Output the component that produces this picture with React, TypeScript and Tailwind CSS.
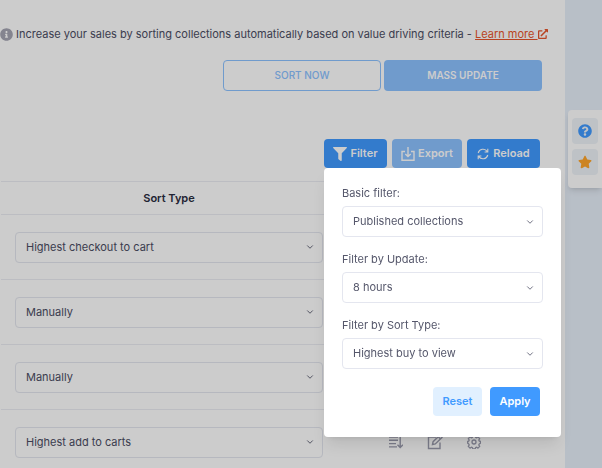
import { useState } from "react";
import { FaExternalLinkAlt, FaFilter, FaInfoCircle, FaQuestionCircle, FaStar } from "react-icons/fa";
import { FiChevronDown } from "react-icons/fi";

const SORT_TYPES = ["Highest checkout to cart", "Manually", "Highest add to carts", "Highest buy to view"];
const STATUSES = ["Published collections", "All collections"];
const UPDATES = ["8 hours", "24 hours"];

const initialRows = [
  { id: 1, sort: "Highest checkout to cart" },
  { id: 2, sort: "Manually" },
  { id: 3, sort: "Manually" },
  { id: 4, sort: "Highest add to carts" },
];

export default function App() {
  const [rows, setRows] = useState(initialRows);
  const [open, setOpen] = useState(true);

  function changeSort(id: number, sort: string) {
    setRows((prev) => prev.map((r) => (r.id === id ? { ...r, sort } : r)));
  }

  return (
    <div className="flex h-screen overflow-hidden bg-[#e7eff9] font-['Inter',sans-serif] text-[11px] text-[#4b4d63]">
      <main className="min-w-0 flex-1 bg-white pt-[26px]">
        <p className="flex h-4 items-center gap-[3px] pr-6 whitespace-nowrap">
          <FaInfoCircle className="size-[13px] shrink-0 text-[#a5a5b3]" />
          <span>
            Increase your sales by sorting collections automatically based on value driving criteria -{" "}
            <a href="#learn" className="text-[#e8552b] underline">
              Learn more <FaExternalLinkAlt className="inline size-[10px] align-[-1px]" />
            </a>
          </span>
        </p>

        <div className="mt-[18px] flex justify-end gap-[3px] pr-[23px] text-[10px]">
          <button className="h-[31px] w-[158px] rounded border border-[#8cc2ff] font-medium text-[#8cc2ff]">
            SORT NOW
          </button>
          <button className="h-[31px] w-[158px] rounded bg-[#8cc2ff] font-semibold text-white">MASS UPDATE</button>
        </div>

        <div className="mt-12 flex justify-end gap-[5px] pr-[25px] font-semibold text-white">
          <div className="relative">
            <button
              className="flex h-[29px] w-[63px] items-center justify-center gap-[3px] rounded bg-[#409aff]"
              onClick={() => setOpen(!open)}
            >
              <FaFilter className="size-[14px]" />
              Filter
            </button>
            {open && <FilterPanel onClose={() => setOpen(false)} />}
          </div>
          <button className="flex h-[29px] w-[70px] items-center justify-center gap-[3px] rounded bg-[#8cc2ff]">
            <ExportIcon />
            Export
          </button>
          <button className="flex h-[29px] w-[73px] items-center justify-center gap-1 rounded bg-[#409aff]">
            <ReloadIcon />
            Reload
          </button>
        </div>

        <div className="mt-[13px] pr-6 pl-px">
          <table className="w-full border-t border-[#ebedf3]">
            <thead>
              <tr className="h-[33px] border-b border-[#ebedf3]">
                <th className="w-[336px] font-semibold text-[#2a2c40]">Sort Type</th>
                <th aria-label="Actions" />
              </tr>
            </thead>
            <tbody>
              {rows.map((row) => (
                <tr key={row.id} className="h-[65px] border-b border-[#ebedf3]">
                  <td className="px-[14px]">
                    <Select
                      label={`Sort type of collection ${row.id}`}
                      value={row.sort}
                      options={SORT_TYPES}
                      onChange={(v) => changeSort(row.id, v)}
                    />
                  </td>
                  <td>
                    <div className="flex items-center justify-center gap-6 pr-2 text-[#9a9bad]">
                      <button aria-label="Sort">
                        <SortIcon />
                      </button>
                      <button aria-label="Edit">
                        <EditIcon />
                      </button>
                      <button aria-label="Settings">
                        <GearIcon />
                      </button>
                    </div>
                  </td>
                </tr>
              ))}
            </tbody>
          </table>
        </div>
      </main>

      <div className="w-[37px] shrink-0" />

      <aside className="absolute top-[110px] right-0 flex w-[34px] flex-col items-center gap-[5px] rounded-l bg-white pt-2 pb-[13px] shadow-md">
        <button aria-label="Help" className="flex size-[26px] items-center justify-center rounded bg-[#eef3f8]">
          <FaQuestionCircle className="size-[14px] text-[#409aff]" />
        </button>
        <button aria-label="Favourites" className="flex size-[26px] items-center justify-center rounded bg-[#eef3f8]">
          <FaStar className="size-[14px] text-[#ffa52b]" />
        </button>
      </aside>

      {open && <div className="fixed inset-0 z-10 bg-black/20" onClick={() => setOpen(false)} />}
    </div>
  );
}

function FilterPanel({ onClose }: { onClose(): void }) {
  const [status, setStatus] = useState("Published collections");
  const [update, setUpdate] = useState("8 hours");
  const [sort, setSort] = useState("Highest buy to view");

  return (
    <div className="absolute top-full left-0 z-20 w-[237px] rounded bg-white px-[18px] pt-[17px] pb-[21px] font-normal text-[#55576b] shadow-lg">
      <div className="space-y-[14px]">
        <Field label="Basic filter:" value={status} options={STATUSES} onChange={setStatus} />
        <Field label="Filter by Update:" value={update} options={UPDATES} onChange={setUpdate} />
        <Field label="Filter by Sort Type:" value={sort} options={SORT_TYPES} onChange={setSort} />
      </div>
      <div className="mt-[18px] flex justify-end gap-2 pr-[3px] font-semibold">
        <button className="h-[29px] w-[49px] rounded bg-[#e1f0ff] text-[#409aff]" onClick={onClose}>
          Reset
        </button>
        <button className="h-[29px] w-[50px] rounded bg-[#409aff] text-white" onClick={onClose}>
          Apply
        </button>
      </div>
    </div>
  );
}

type SelectProps = {
  label: string;
  value: string;
  options: string[];
  onChange(value: string): void;
};

function Field(props: SelectProps) {
  return (
    <label className="block">
      <span className="mb-[5px] block leading-4">{props.label}</span>
      <Select {...props} />
    </label>
  );
}

function Select({ label, value, options, onChange }: SelectProps) {
  return (
    <span className="grid items-center">
      <select
        aria-label={label}
        className="col-start-1 row-start-1 h-[31px] w-full appearance-none rounded border border-[#e4e6ef] bg-transparent pr-8 pl-[10px]"
        value={value}
        onChange={(e) => onChange(e.target.value)}
      >
        {options.map((o) => (
          <option key={o}>{o}</option>
        ))}
      </select>
      <FiChevronDown className="pointer-events-none col-start-1 row-start-1 mr-2 size-[10px] justify-self-end" />
    </span>
  );
}

function ExportIcon() {
  return (
    <svg className="size-[14px]" viewBox="0 0 14 14" fill="none" stroke="currentColor" strokeWidth="1.4">
      <path d="M4 4.500H1v8.700h12V4.500h-3M7 0v9.500M4.300 6.900L7 9.600l2.700-2.700" />
    </svg>
  );
}

function ReloadIcon() {
  return (
    <svg className="size-3" viewBox="0 0 12 12" fill="none" stroke="currentColor" strokeWidth="1.1">
      <path d="M1.200 5A5 5 0 0 1 10.300 3.600M10.800 .8v3.200H7.600M10.800 7A5 5 0 0 1 1.700 8.400M1.200 11.200V8h3.200" />
    </svg>
  );
}

function SortIcon() {
  return (
    <svg className="size-[14px]" viewBox="0 0 14 14" fill="none" stroke="currentColor" strokeWidth="1.4">
      <path d="M0 2h9M0 5.300h9M0 8.600h7M0 11.900h8M11.200 1.500v11M8.500 9.800l2.700 2.700L14 9.800" />
    </svg>
  );
}

function EditIcon() {
  return (
    <svg className="size-4" viewBox="0 0 16 16" fill="none" stroke="currentColor" strokeWidth="1.4">
      <path d="M9 3H1.500v11.500H13V8.500" />
      <path d="M5.500 10.500l.6-2.800 6.700-6.500 2.200 2.200-6.700 6.500zM11.300 2.700l2.200 2.200" />
    </svg>
  );
}

function GearIcon() {
  return (
    <svg
      className="size-[14px]"
      viewBox="0 0 14 14"
      fill="none"
      stroke="currentColor"
      strokeWidth="1.3"
      strokeLinejoin="round"
    >
      <path d="M5.800 .8h2.400l.4 1.600 1 .4 1.400-.9 1.700 1.700-.9 1.400.4 1 1.300.3v1.900l-1.300.8-.4 1 .9 1.400-1.700 1.700-1.400-.9-1 .4-.4 1.300H5.800l-.4-1.300-1-.4-1.400.9-1.700-1.700.9-1.400-.4-1L.7 8.200V6.300L1.800 6l.4-1-.9-1.400L3 1.900l1.400.9 1-.4z" />
      <circle cx="7" cy="7" r="2" />
    </svg>
  );
}
